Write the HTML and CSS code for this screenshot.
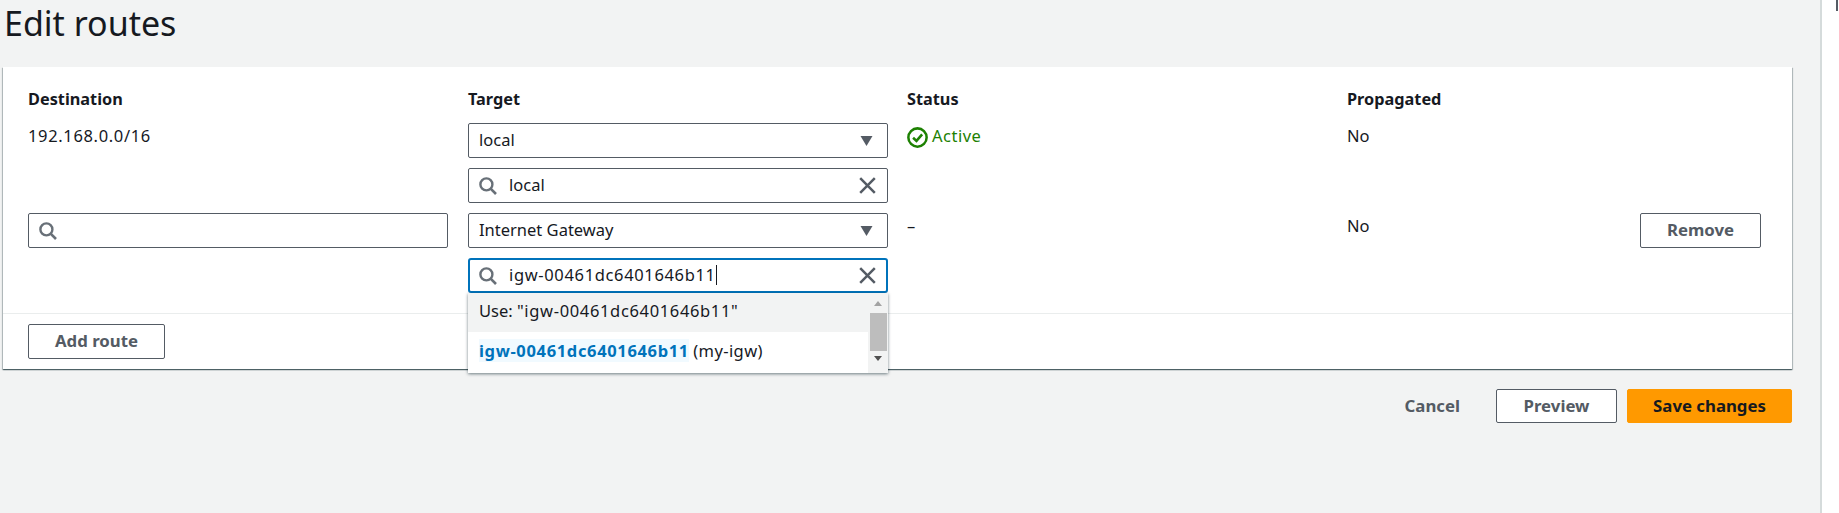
FILE: index.html
```html
<!DOCTYPE html>
<html lang="en">

<head>
    <meta charset="UTF-8">
    <title>Edit routes</title>
    <link rel="stylesheet" href="styles.css">
</head>

<body>
    <svg class="defs" width="0" height="0">
        <symbol id="search" viewBox="0 0 18 18">
            <circle cx="7.4" cy="7.4" r="6" fill="none" stroke="currentColor" stroke-width="2.4" />
            <path d="M11.6 11.6 17 17" fill="none" stroke="currentColor" stroke-width="2.6" />
        </symbol>
        <symbol id="clear" viewBox="0 0 17 17">
            <path d="M1.2 1.2 15.8 15.8M15.8 1.2 1.2 15.8" fill="none" stroke="currentColor" stroke-width="2.5" />
        </symbol>
        <symbol id="caret" viewBox="0 0 12 10">
            <path d="M0 0H12L6 10Z" fill="currentColor" />
        </symbol>
    </svg>

    <div class="page">
        <main class="content">
            <h1 class="title">Edit routes</h1>

            <section class="panel">
                <div class="routes">
                    <div class="head">Destination</div>
                    <div class="head">Target</div>
                    <div class="head">Status</div>
                    <div class="head">Propagated</div>

                    <div class="cell cell-text"><span class="digits">192.168.0.0/16</span></div>
                    <div class="cell stack">
                        <div class="field select">
                            <span class="value">local</span>
                            <svg class="caret"><use href="#caret" /></svg>
                        </div>
                        <div class="field">
                            <svg class="mag"><use href="#search" /></svg>
                            <span class="value">local</span>
                            <svg class="clear"><use href="#clear" /></svg>
                        </div>
                    </div>
                    <div class="cell cell-text status-active">
                        <svg class="check" viewBox="0 0 20 20">
                            <circle cx="10" cy="10" r="8.7" fill="none" stroke="currentColor" stroke-width="2.4" />
                            <path d="M5.8 10.2 9 13.2 14.4 7" fill="none" stroke="currentColor" stroke-width="2.4" />
                        </svg>
                        Active
                    </div>
                    <div class="cell cell-text">No</div>

                    <div class="cell">
                        <div class="field">
                            <svg class="mag"><use href="#search" /></svg>
                        </div>
                    </div>
                    <div class="cell stack">
                        <div class="field select">
                            <span class="value">Internet Gateway</span>
                            <svg class="caret"><use href="#caret" /></svg>
                        </div>
                        <div class="combo">
                            <div class="field focused">
                                <svg class="mag"><use href="#search" /></svg>
                                <span class="value"><span class="digits">igw-00461dc6401646b11</span><i class="cursor"></i></span>
                                <svg class="clear"><use href="#clear" /></svg>
                            </div>
                            <div class="dropdown">
                                <ul class="options">
                                    <li class="option highlighted">Use: <span class="digits">"igw-00461dc6401646b11"</span></li>
                                    <li class="option"><mark class="match digits">igw-00461dc6401646b11</mark> <span class="alias">(my-igw)</span></li>
                                </ul>
                                <div class="scrollbar">
                                    <span class="arrow arrow-up"></span>
                                    <span class="thumb"></span>
                                    <span class="arrow arrow-down"></span>
                                </div>
                            </div>
                        </div>
                    </div>
                    <div class="cell cell-text">–</div>
                    <div class="cell cell-text last-row">
                        <span>No</span>
                        <button class="btn btn-remove" type="button">Remove</button>
                    </div>
                </div>

                <div class="panel-footer">
                    <button class="btn btn-add" type="button">Add route</button>
                </div>
            </section>

            <div class="actions">
                <button class="btn-link" type="button">Cancel</button>
                <button class="btn btn-preview" type="button">Preview</button>
                <button class="btn btn-primary" type="button">Save changes</button>
            </div>
        </main>
        <aside class="side">
            <span class="side-mark"></span>
        </aside>
    </div>
</body>

</html>
```

FILE: styles.css
```css
* {
    box-sizing: border-box;
}

html,
body {
    margin: 0;
    height: 100%;
    overflow: hidden;
}

body {
    font-family: "Noto Sans", "Open Sans", Arial, sans-serif;
    font-size: 16.5px;
    color: #16191f;
    background: #fff;
}

.defs {
    position: absolute;
}

.page {
    display: flex;
    height: 513px;
}

.content {
    width: 1822px;
    background: #f2f3f3;
    border-right: 2px solid #d5dbdb;
    padding: 0 28px 0 3px;
}

.side {
    flex: 1;
    display: flex;
    justify-content: flex-end;
    padding-right: 1px;
}

.side-mark {
    width: 2px;
    height: 11px;
    background: #545b64;
}

.title {
    margin: 0;
    padding-left: 1px;
    height: 67px;
    font-size: 34px;
    line-height: 46px;
    font-weight: 400;
}

.panel {
    width: 1789px;
    background: #fff;
    box-shadow: 0 1px 1px 0 rgba(0, 28, 36, 0.5), 1px 1px 1px 0 rgba(0, 28, 36, 0.2), -1px 1px 1px 0 rgba(0, 28, 36, 0.2);
}

.routes {
    display: grid;
    grid-template-columns: 440px 439px 440px 1fr;
    grid-template-rows: 34px 90px 90px;
    height: 246px;
    padding: 22px 27px 20px 25px;
}

.head {
    font-weight: 700;
    font-size: 16.3px;
    line-height: 20px;
}

.cell {
    padding-right: 20px;
}

.cell-text {
    padding-top: 2px;
    line-height: 22px;
}

.digits {
    letter-spacing: 0.65px;
}

.status-active {
    display: flex;
    align-items: flex-start;
    gap: 4px;
    letter-spacing: 0.5px;
    color: #1d8102;
}

.check {
    flex: none;
    width: 21px;
    height: 21px;
    margin-top: 2px;
}

.stack {
    display: flex;
    flex-direction: column;
    gap: 10px;
    padding-right: 19px;
}

.field {
    display: flex;
    align-items: center;
    height: 35px;
    padding: 0 10px;
    background: #fff;
    border: 1px solid #545b64;
    border-radius: 2px;
}

.field.focused {
    padding: 0 9px;
    border: 2px solid #0073bb;
    border-radius: 3px;
}

.value {
    flex: 1;
    padding-bottom: 2px;
    line-height: 22px;
    white-space: nowrap;
}

.mag {
    width: 18px;
    height: 18px;
    margin-right: 12px;
    color: #687078;
}

.clear {
    width: 17px;
    height: 17px;
    margin-right: 1px;
    color: #545b64;
}

.caret {
    width: 13px;
    height: 10px;
    margin-right: 4px;
    color: #545b64;
}

.cursor {
    display: inline-block;
    width: 1px;
    height: 20px;
    vertical-align: -4px;
    background: #16191f;
}

.combo {
    position: relative;
}

.dropdown {
    position: absolute;
    top: 35px;
    left: 0;
    right: 0;
    z-index: 2;
    display: flex;
    height: 80px;
    background: #fff;
    box-shadow: 0 1px 3px 0 rgba(0, 28, 36, 0.55);
}

.options {
    flex: 1;
    margin: 0;
    padding: 0;
    list-style: none;
}

.option {
    height: 41px;
    padding: 8px 11px 0;
    line-height: 22px;
    white-space: nowrap;
}

.highlighted {
    height: 39px;
    padding-top: 7px;
    background: #f2f3f3;
}

.match {
    font-weight: 700;
    color: #0073bb;
    background: #f1faff;
}

.alias {
    letter-spacing: 0.4px;
}

.scrollbar {
    display: flex;
    flex-direction: column;
    align-items: center;
    width: 20px;
    background: #f2f3f3;
}

.thumb {
    width: 17px;
    height: 38px;
    margin: 7px 0 5px;
    background: #bdbdbd;
}

.arrow {
    width: 0;
    height: 0;
    margin-top: 8px;
    border-left: 4px solid transparent;
    border-right: 4px solid transparent;
}

.arrow-up {
    border-bottom: 5px solid #a3a3a3;
}

.arrow-down {
    margin-top: 0;
    border-top: 5px solid #505050;
}

.last-row {
    display: flex;
    justify-content: space-between;
    padding-right: 0;
    color: #16191f;
}

.btn {
    height: 35px;
    padding: 0 0 2px;
    font-family: inherit;
    font-size: 16.8px;
    font-weight: 700;
    color: #545b64;
    background: #fff;
    border: 1px solid #545b64;
    border-radius: 2px;
}

.btn-remove {
    width: 121px;
    margin-top: -2px;
    margin-right: 4px;
}

.panel-footer {
    padding: 10px 25px;
    border-top: 1px solid #eaeded;
}

.btn-add {
    display: block;
    width: 137px;
}

.actions {
    display: flex;
    justify-content: flex-end;
    align-items: center;
    gap: 10px;
    width: 1789px;
    padding-top: 20px;
}

.btn-link {
    margin-right: 26px;
    padding: 0 0 2px;
    font-family: inherit;
    font-size: 16.8px;
    font-weight: 700;
    color: #545b64;
    background: none;
    border: 0;
}

.btn-preview {
    width: 121px;
    height: 34px;
}

.btn-primary {
    width: 165px;
    height: 34px;
    color: #16191f;
    background: #ff9900;
    border-color: #ff9900;
}
```
